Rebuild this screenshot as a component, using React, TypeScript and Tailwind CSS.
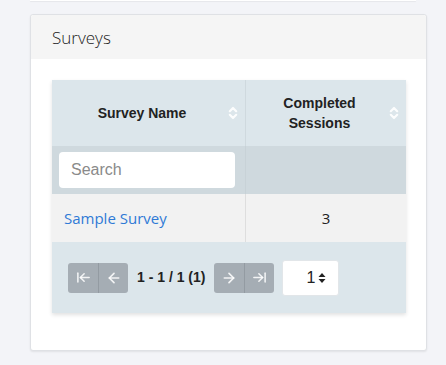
import { ArrowLeft, ArrowLeftToLine, ArrowRight, ArrowRightToLine } from "lucide-react";

function SortIcon() {
  return (
    <svg width="10" height="14" viewBox="0 0 10 14" className="shrink-0">
      <path
        d="M1.8 5.2 L5 2 L8.2 5.2 M1.8 8.8 L5 12 L8.2 8.8"
        fill="none"
        stroke="#ffffff"
        strokeWidth="2.2"
        strokeLinecap="round"
        strokeLinejoin="round"
        opacity="0.9"
      />
    </svg>
  );
}

const pagerBtn =
  "w-[30px] h-[30px] flex items-center justify-center text-white/85 bg-[#a5adb4]";

export default function App() {
  return (
    <div className="w-[446px] h-[365px] bg-[#f3f4f8] overflow-hidden relative font-['Open_Sans',sans-serif]">
      <div className="mx-[30px] h-px bg-white shadow-[0_1px_1px_rgba(0,0,0,0.06)]" />
      <div className="mt-[13px] ml-[30px] w-[397px] h-[337px] bg-white border border-[#dfe1e5] rounded-[3px] shadow-[0_1px_2px_rgba(0,0,0,0.08)] flex flex-col">
        <div className="h-[44px] bg-[#f5f5f5] rounded-t-[3px] flex items-center pl-[21px] pt-[2px] text-[17px] font-light text-[#222]">
          Surveys
        </div>
        <div className="pt-[21px] px-[21px]">
          <div className="w-[354px] shadow-[0_2px_4px_rgba(0,0,0,0.12)]">
            {/* header */}
            <div className="flex h-[66px] bg-[#dce6eb] text-[14px] font-bold text-[#222] font-['Liberation_Sans',sans-serif]">
              <div className="w-[194px] border-r border-[#cfd9de] flex items-center pl-[4px] pr-[7px]">
                <span className="flex-1 text-center">Survey Name</span>
                <SortIcon />
              </div>
              <div className="flex-1 flex items-center pl-[4px] pr-[7px]">
                <span className="flex-1 text-center leading-[20px]">
                  Completed
                  <br />
                  Sessions
                </span>
                <SortIcon />
              </div>
            </div>
            {/* filter row */}
            <div className="flex h-[48px] bg-[#cfd9de]">
              <div className="w-[194px] border-r border-[#c8d2d7] flex items-center px-[7px]">
                <input
                  placeholder="Search"
                  className="w-[176px] h-[36px] bg-white rounded-[4px] px-[12px] text-[16px] font-['Liberation_Sans',sans-serif] placeholder:text-[#8a8a8a] outline-none"
                />
              </div>
              <div className="flex-1" />
            </div>
            {/* data row */}
            <div className="flex h-[48px] bg-[#f2f2f2] text-[15px]">
              <div className="w-[194px] border-r border-[#dedede] flex items-center pl-[12px] text-[#2f7ad6]">
                Sample Survey
              </div>
              <div className="flex-1 flex items-center justify-center text-[#222]">3</div>
            </div>
            {/* footer */}
            <div className="flex items-center h-[71px] bg-[#dce6eb] pl-[16px]">
              <div className="flex rounded-[3px] overflow-hidden">
                <div className={pagerBtn}>
                  <ArrowLeftToLine size={15} strokeWidth={2.5} />
                </div>
                <div className={`${pagerBtn} border-l border-[#939ba2]`}>
                  <ArrowLeft size={16} strokeWidth={2.5} />
                </div>
              </div>
              <span className="ml-[9px] text-[14px] font-bold text-[#222] font-['Liberation_Sans',sans-serif]">
                1 - 1 / 1 (1)
              </span>
              <div className="ml-[9px] flex rounded-[3px] overflow-hidden">
                <div className={pagerBtn}>
                  <ArrowRight size={16} strokeWidth={2.5} />
                </div>
                <div className={`${pagerBtn} border-l border-[#939ba2]`}>
                  <ArrowRightToLine size={15} strokeWidth={2.5} />
                </div>
              </div>
              <div className="ml-[8px] w-[57px] h-[36px] bg-white rounded-[3px] border border-[#e2e6e9] flex items-center justify-end pr-[12px] gap-[3px] text-[16px] text-[#222] font-['Liberation_Sans',sans-serif]">
                1
                <svg width="8" height="12" viewBox="0 0 8 12">
                  <path d="M4 1 L7.5 5 H0.5 Z" fill="#222" />
                  <path d="M4 11 L7.5 7 H0.5 Z" fill="#222" />
                </svg>
              </div>
            </div>
          </div>
        </div>
      </div>
    </div>
  );
}
